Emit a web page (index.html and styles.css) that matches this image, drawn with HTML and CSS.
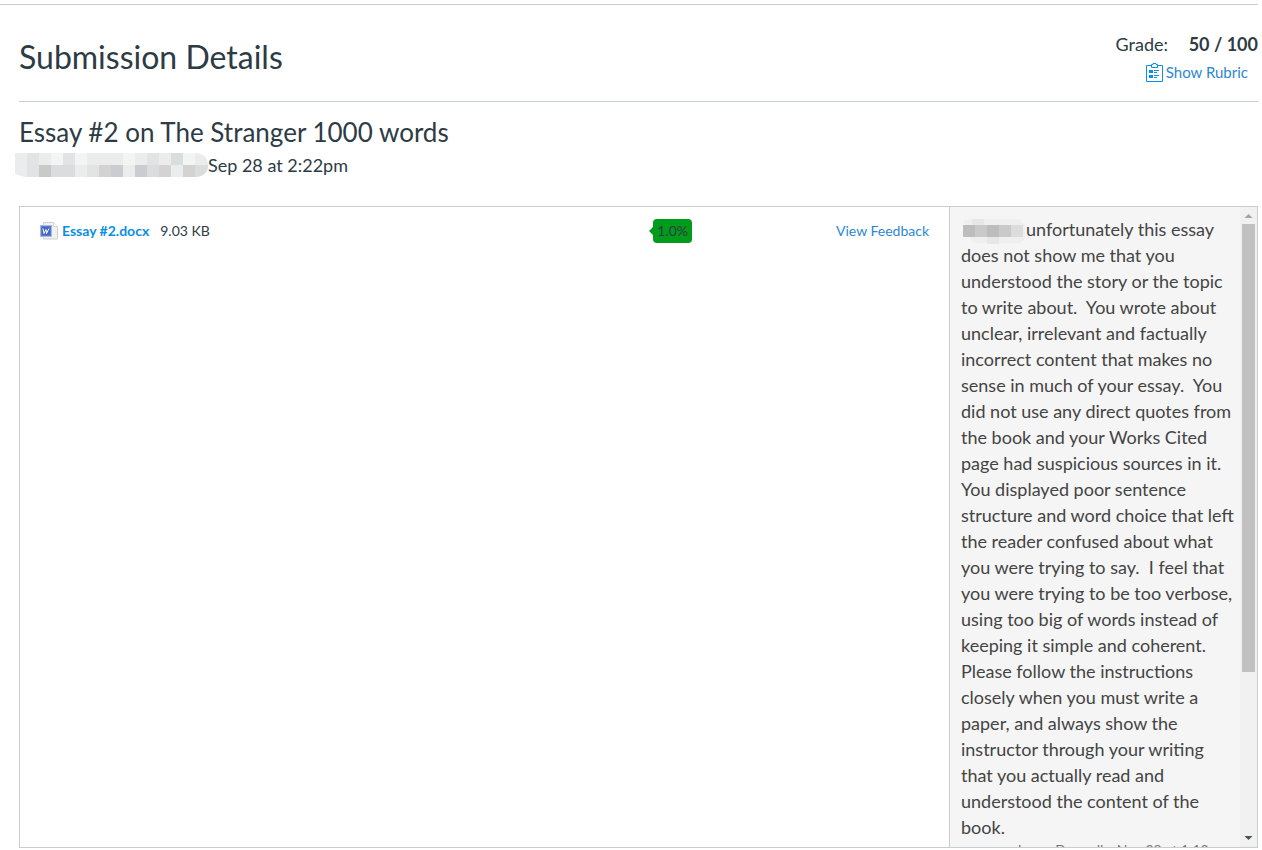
FILE: index.html
```html
<!DOCTYPE html>
<html lang="en">
<head>
  <meta charset="UTF-8">
  <title>Submission Details</title>
  <link rel="stylesheet" href="styles.css">
</head>
<body>
  <div class="submission">
    <header class="submission-header">
      <h1>Submission Details</h1>
      <div class="grade-box">
        <div class="grade">Grade: <strong>50 / 100</strong></div>
        <a class="rubric-link" href="#rubric">
          <svg width="17" height="19" viewBox="0 0 17 19" fill="none" stroke="#0b8ee6" aria-hidden="true">
            <path d="M5 2.500H.5v16h16v-16H12"/>
            <path d="M5.500 4.500v-3h1.500v-1h3v1h1.500v3z"/>
            <path d="M3 7h4v3H3zM3 12h4v3H3z" fill="#0b8ee6" stroke="none"/>
            <path d="M8 7.500h5M8 9.500h3M8 12.500h5M8 14.500h3"/>
          </svg>
          <span>Show Rubric</span>
        </a>
      </div>
    </header>

    <h2>Essay #2 on The Stranger 1000 words</h2>
    <div class="submitted">
      <svg class="hidden-name" width="193" height="25" viewBox="0 0 193 25" shape-rendering="crispEdges" aria-hidden="true">
        <clipPath id="name-clip"><path d="M0 0H181Q193 1 193 12Q193 23 181 24H10L0 21z"/></clipPath>
        <g clip-path="url(#name-clip)">
          <path fill="#ebecec" d="M0 0h193v25H0z"/>
          <path fill="#e2e3e4" d="M12 0h12v12H12zM48 0h12v12H48zM12 12h12v13H12zM132 0h12v12h-12zM72 12h12v13H72z"/>
          <path fill="#f3f4f4" d="M36 0h12v12H36zM60 0h12v12H60zM108 0h12v12h-12zM168 0h12v12h-12z"/>
          <path fill="#dadddd" d="M156 0h12v12h-12zM36 12h24v13H36zM132 12h12v13h-12zM180 12h13v13h-13z"/>
          <path fill="#c9c9c8" d="M24 12h12v13H24z"/>
          <path fill="#c9ccd0" d="M96 12h12v13H96zM120 12h12v13h-12z"/>
          <path fill="#d3d3d1" d="M84 12h12v13H84zM144 12h12v13h-12zM168 12h12v13h-12z"/>
        </g>
      </svg>
      <span>Sep 28 at 2:22pm</span>
    </div>

    <main class="preview">
      <section class="files">
        <div class="file">
          <svg class="doc-icon" width="18" height="18" viewBox="0 0 18 18" aria-hidden="true">
            <path d="M3.500 .5h10l4 4v12.500h-14z" fill="#f1f1f1" stroke="#cfcfcf"/>
            <path d="M13.500 .5v4h4" fill="#fff" stroke="#d6d6d6"/>
            <path d="M.5 3.500h11v11H.5z" fill="#5b7bd0" stroke="#a5b8ea"/>
            <path d="M2 5h8v8H2z" fill="#4668c0"/>
            <path d="M3 6.500l1 5 2-4 .5 4 2.500-5" fill="none" stroke="#fff"/>
          </svg>
          <a class="file-name" href="#file">Essay #2.docx</a>
          <span class="file-size">9.03 KB</span>
        </div>
        <a class="score" href="#report">1.0%</a>
        <a class="feedback-link" href="#feedback">View Feedback</a>
      </section>

      <aside class="comments">
        <div class="comment">
          <p><svg class="hidden-student" width="64" height="25" viewBox="0 0 64 25" shape-rendering="crispEdges" aria-hidden="true">
            <path fill="#efefef" d="M2 2l8-2h48l6 6v14l-6 4H12z"/>
            <path fill="#e7e7e8" d="M11 0h12v6H11zM26 18h12v7H26z"/>
            <path fill="#bdbdbe" d="M2 6h12v12H2zM26 6h12v12H26z"/>
            <path fill="#c9c9c9" d="M14 6h12v12H14zM38 6h12v12H38z"/>
            <path fill="#dcdcdc" d="M50 6h12v12H50z"/>
          </svg>unfortunately this essay does not show me that you understood the story or the topic to write about.&nbsp; You wrote about unclear, irrelevant and factually incorrect content that makes no sense in much of your essay.&nbsp; You did not use any direct quotes from the book and your Works Cited page had suspicious sources in it.&nbsp; You displayed poor sentence structure and word choice that left the reader confused about what you were trying to say.&nbsp; I feel that you were trying to be too verbose, using too big of words instead of keeping it simple and coherent.&nbsp; Please follow the instructions closely when you must write a paper, and always show the instructor through your writing that you actually read and understood the content of the book.</p>
          <div class="comment-author">Laura Donnelly, Nov 28 at 1:12pm</div>
        </div>
        <div class="scrollbar" aria-hidden="true">
          <svg width="17" height="17" viewBox="0 0 17 17"><path d="M4.500 11l4-4 4 4z" fill="#a3a3a3"/></svg>
          <div class="track"><div class="thumb"></div></div>
          <svg width="17" height="17" viewBox="0 0 17 17"><path d="M4.500 6l4 4 4-4z" fill="#505050"/></svg>
        </div>
      </aside>
    </main>
  </div>
</body>
</html>
```
FILE: styles.css
```css
* {
  box-sizing: border-box;
}
body {
  margin: 0;
  padding: 4px 4px 2px 0;
  height: 100vh;
  background-color: #fff;
  color: #2d3b45;
  font-family: Lato, sans-serif;
  font-size: 18px;
  line-height: 26px;
}
a {
  color: #0b8ee6;
  text-decoration: none;
}
a:hover {
  text-decoration: underline;
}
.submission {
  display: flex;
  flex-direction: column;
  height: 100%;
  border-top: 1px solid #c7cdd1;
  padding-left: 19px;
}
.submission-header {
  display: flex;
  justify-content: space-between;
  padding: 26px 0 16px;
  border-bottom: 1px solid #c7cdd1;
}
h1 {
  margin: 0;
  padding-top: 2px;
  font-size: 32px;
  font-weight: 400;
  line-height: 48px;
}
.grade-box {
  display: flex;
  flex-direction: column;
  align-items: flex-end;
  gap: 2px;
}
.grade strong {
  margin-left: 16px;
}
.rubric-link {
  display: flex;
  align-items: center;
  gap: 3px;
  padding-right: 10px;
  font-size: 15px;
}
.rubric-link,
.feedback-link {
  color: #2d87d6;
}
h2 {
  margin: 0;
  padding-top: 12px;
  font-size: 26px;
  font-weight: 400;
  line-height: 36px;
}
.submitted {
  display: flex;
  align-items: center;
  height: 30px;
}
.hidden-name {
  flex: none;
  margin-left: -4px;
}
.preview {
  display: flex;
  flex: 1;
  min-height: 0;
  margin-top: 26px;
  border: 1px solid #c7cdd1;
}
.files {
  display: grid;
  flex: 1;
  grid-template-columns: 1fr auto 237px;
  align-items: center;
  align-content: start;
  padding: 12px 20px;
  font-size: 14px;
  line-height: 24px;
}
.file {
  display: flex;
  align-items: center;
}
.doc-icon {
  margin-right: 4px;
}
.file-name {
  margin-right: 11px;
  font-weight: 700;
}
.score {
  position: relative;
  padding: 0 4px;
  border-radius: 4px;
  background-color: #009c1a;
  color: #2d3b45;
}
.score::before {
  content: "";
  position: absolute;
  top: 8px;
  left: -4px;
  border: solid transparent;
  border-width: 4px 4px 4px 0;
  border-right-color: #009c1a;
}
.feedback-link {
  justify-self: end;
}
.comments {
  display: flex;
  flex: none;
  width: 308px;
  border-left: 1px solid #c7cdd1;
  background-color: #f5f5f5;
  color: #444;
}
.comment {
  flex: 1;
  overflow: hidden;
  padding: 9px 4px 0 11px;
}
.comment p {
  margin: 0;
}
.hidden-student {
  margin: -5px 1px -5px 0;
  vertical-align: middle;
}
.comment-author {
  padding-right: 8px;
  color: #777;
  font-size: 14px;
  line-height: 20px;
  text-align: right;
}
.scrollbar {
  display: flex;
  flex-direction: column;
  width: 17px;
  background-color: #f1f1f1;
}
.track {
  flex: 1;
  padding: 0 2px;
}
.thumb {
  height: 74%;
  background-color: #c1c1c1;
}
```
